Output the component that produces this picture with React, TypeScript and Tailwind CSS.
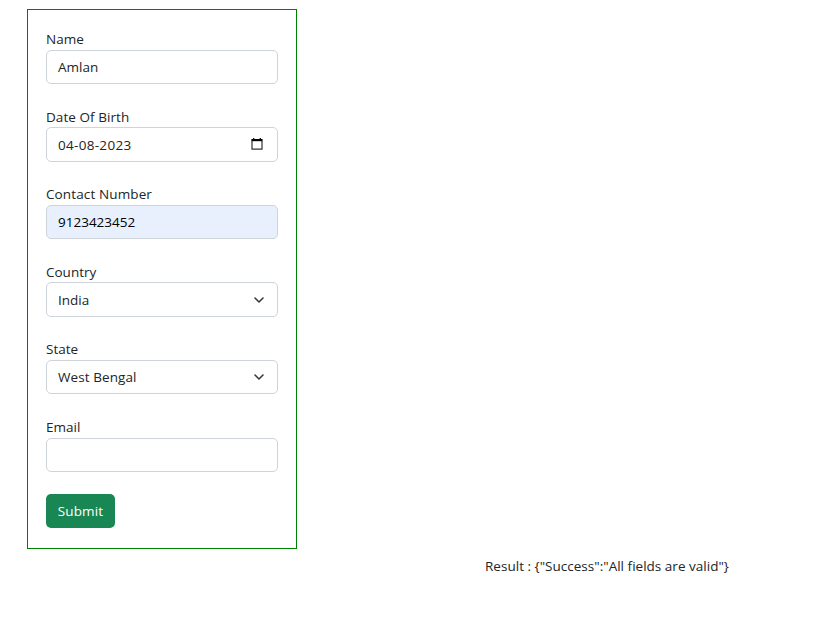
import type { ReactNode } from 'react';

function Calendar() {
  return (
    <svg width="12" height="13" viewBox="0 0 12 13" className="mr-2 -mt-px">
      <path d="M1 3v8.2h10V3" fill="none" stroke="#333" strokeWidth="1.2" />
      <path d="M.4 1h11.2v2.2H.4z" fill="#000" />
      <path d="M2 0h1.4v1H2zM8.6 0H10v1H8.6z" fill="#222" />
    </svg>
  );
}

function Chevron() {
  return (
    <svg width="12" height="12" viewBox="0 0 12 12" className="mr-1.5" fill="none">
      <path d="m2 4 4 4 4-4" stroke="#343a40" strokeWidth="1.6" strokeLinecap="round" strokeLinejoin="round" />
    </svg>
  );
}

type FieldProps = {
  label: string;
  labelClass?: string;
  box?: string;
  gap?: string;
  children?: ReactNode;
};

function Field({ label, labelClass = '', box = 'h-[34px] bg-white', gap = 'mb-[21px]', children }: FieldProps) {
  return (
    <div className={gap}>
      <div className={`flex h-[22px] items-center ${labelClass}`}><span>{label}</span></div>
      <div className={`flex items-center justify-between rounded-[5px] border border-[#ced4da] pl-[11px] pr-[6px] ${box}`}>
        {children}
      </div>
    </div>
  );
}

export default function App() {
  return (
    <main className="h-[622px] w-[816px] overflow-hidden bg-white pl-[27px] pt-[9px] font-['Open_Sans','Noto_Sans',sans-serif] text-[13.5px] leading-[22px] text-[#212529]">
      <form className="h-[540px] w-[270px] border border-[#008000] px-[18px] pt-[18px]">
        <Field label="Name">
          <span>Amlan</span>
        </Field>
        <Field label="Date Of Birth" labelClass="pt-[2px] tracking-[0.06px]" box="h-[35px] bg-white">
          <span className="tracking-[0.3px]">04-08-2023</span>
          <Calendar />
        </Field>
        <Field label="Contact Number" labelClass="tracking-[0.12px]" box="h-[34px] bg-[#e8f0fe] text-black">
          <span>9123423452</span>
        </Field>
        <Field label="Country" labelClass="pt-[2px]" box="h-[35px] bg-white">
          <span>India</span>
          <Chevron />
        </Field>
        <Field label="State" gap="mb-[22px]">
          <span className="tracking-[0.08px]">West Bengal</span>
          <Chevron />
        </Field>
        <Field label="Email" gap="mb-[22px]" />
        <button type="button" className="flex h-[34px] w-[69px] items-center justify-center rounded-[5px] bg-[#198754] tracking-[0.15px] text-white">
          <span>Submit</span>
        </button>
      </form>
      <div className="ml-[458px] mt-[6px] whitespace-nowrap tracking-[0.02px]">
        <span>{'Result : {"Success":"All fields are valid"}'}</span>
      </div>
    </main>
  );
}
